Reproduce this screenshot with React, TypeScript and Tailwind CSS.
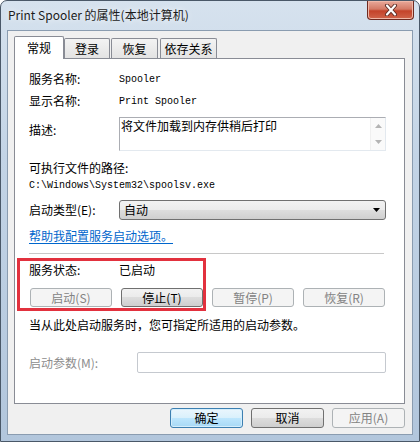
const cjk = "font-['Noto_Sans_CJK_SC','Noto_Sans',sans-serif]";
const mono = "font-['Liberation_Mono',monospace]";

function Btn({
  label,
  disabled,
  focused,
  className = '',
}: {
  label: string;
  disabled?: boolean;
  focused?: boolean;
  className?: string;
}) {
  let look =
    'border-[#707070] bg-[linear-gradient(#f2f2f2_0%,#ebebeb_50%,#dddddd_50%,#cfcfcf_100%)] text-black';
  if (disabled) look = 'border-[#adb2b5] bg-[#f4f4f4] text-[#838383]';
  if (focused)
    look =
      'border-[#3c7fb1] bg-[linear-gradient(#eaf6fd_0%,#d9f0fc_50%,#bee6fd_50%,#a7d9f5_100%)] text-black shadow-[inset_0_0_0_1px_#d4eefc]';
  return (
    <div
      className={`flex items-center justify-center rounded-[3px] border text-[12px] leading-none ${cjk} ${look} ${className}`}
    >
      {label}
    </div>
  );
}

function Tab({
  label,
  active,
  className = '',
}: {
  label: string;
  active?: boolean;
  className?: string;
}) {
  if (active) {
    return (
      <div
        className={`relative z-10 -mb-px flex h-[23px] items-center justify-center rounded-t-[2px] border border-b-0 border-[#898c95] bg-white pb-[1px] text-[12px] ${cjk} ${className}`}
      >
        {label}
      </div>
    );
  }
  return (
    <div
      className={`flex h-[20px] items-center justify-center whitespace-nowrap rounded-t-[2px] border border-b-0 border-[#898c95] bg-[linear-gradient(#f3f3f3,#e3e3e3)] text-[12px] ${cjk} ${className}`}
    >
      {label}
    </div>
  );
}

export default function App() {
  return (
    <div className="h-[442px] w-[420px] overflow-hidden bg-white">
      <div className="flex h-full w-full flex-col rounded-t-[7px] border border-[#4a5868] bg-[linear-gradient(180deg,#d6e2ee_0%,#c3d4e6_35%,#b2c6dc_100%)]">
        {/* title bar */}
        <div className="flex h-[29px] items-start justify-between pl-[7px] pr-[5px]">
          <span
            className={`mt-[6px] text-[12px] leading-[16px] text-[#1b1b1b] [text-shadow:0_0_6px_#ffffff] ${cjk}`}
          >
            Print Spooler 的属性(本地计算机)
          </span>
          <div className="flex h-[19px] w-[47px] items-center justify-center rounded-b-[4px] border border-t-0 border-[#6e2a20] bg-[linear-gradient(#e9a99a_0%,#d47a66_45%,#c4432a_55%,#d0644a_100%)] shadow-[inset_0_0_0_1px_#f0b8a8]">
            <svg width="14" height="12" viewBox="0 0 14 12">
              <path
                d="M3 1.5 L11 10.5 M11 1.5 L3 10.5"
                stroke="#5a2a22"
                strokeWidth="4"
                strokeLinecap="round"
                fill="none"
              />
              <path
                d="M3 1.5 L11 10.5 M11 1.5 L3 10.5"
                stroke="#ffffff"
                strokeWidth="2.2"
                strokeLinecap="round"
                fill="none"
              />
            </svg>
          </div>
        </div>

        {/* client area */}
        <div className="mx-[6px] mb-[6px] flex flex-1 flex-col border border-[#8a9cb0] bg-[#f0f0f0]">
          <div className="mt-[5px] flex h-[22px] items-end pl-[6px]">
            <Tab label="常规" active className="w-[50px]" />
            <Tab label="登录" className="w-[46px]" />
            <Tab label="恢复" className="ml-[1px] w-[47px]" />
            <Tab label="依存关系" className="ml-[2px] w-[57px]" />
          </div>

          {/* tab panel */}
          <div
            className={`relative ml-[6px] mr-[7px] flex h-[346px] flex-col border border-[#898c95] bg-white pl-[14px] pt-[11px] text-[12px] text-black ${cjk}`}
          >
            <div className="flex h-[18px] items-center">
              <span className="w-[90px]">服务名称:</span>
              <span className={`${mono} text-[10px]`}>Spooler</span>
            </div>
            <div className="mt-[4px] flex h-[18px] items-center">
              <span className="w-[90px]">显示名称:</span>
              <span className={`${mono} text-[10px]`}>Print Spooler</span>
            </div>
            <div className="mt-[7px] flex h-[34px] items-start">
              <span className="w-[90px] pt-[4px] leading-[18px]">描述:</span>
              <div className="flex h-[34px] w-[267px] border border-[#abadb3] border-r-[#e3e9ef] border-b-[#e3e9ef] bg-white">
                <div className="flex-1 pl-[1px] leading-[16px]">
                  将文件加载到内存供稍后打印
                </div>
                <div className="flex w-[15px] flex-col items-center justify-between border-l border-[#f0f0f0] bg-[#fafafa] py-[6px]">
                  <svg width="7" height="4" viewBox="0 0 7 4">
                    <path d="M0 4 L3.5 0 L7 4 Z" fill="#b4b4b4" />
                  </svg>
                  <svg width="7" height="4" viewBox="0 0 7 4">
                    <path d="M0 0 L3.5 4 L7 0 Z" fill="#b4b4b4" />
                  </svg>
                </div>
              </div>
            </div>
            <div className="mt-[8px] flex h-[18px] items-center">可执行文件的路径:</div>
            <div className={`flex h-[16px] items-center ${mono} text-[10px]`}>
              C:\Windows\System32\spoolsv.exe
            </div>
            <div className="mt-[7px] flex h-[20px] items-center">
              <span className="w-[90px]">启动类型(E):</span>
              <div className="flex h-[20px] w-[267px] items-center justify-between rounded-[3px] border border-[#707070] bg-[linear-gradient(#f2f2f2_0%,#ebebeb_50%,#dddddd_50%,#cfcfcf_100%)] pl-[4px] pr-[5px]">
                <span>自动</span>
                <svg width="7" height="4" viewBox="0 0 7 4">
                  <path d="M0 0 L3.5 4 L7 0 Z" fill="#000000" />
                </svg>
              </div>
            </div>
            <div className="mt-[7px] flex h-[18px] items-center">
              <span className="text-[#0066cc] underline underline-offset-2">
                帮助我配置服务启动选项。
              </span>
            </div>
            <div className="mt-[8px] h-px w-[355px] bg-[#c8c8c8]" />
            <div className="mt-[7px] flex h-[18px] items-center">
              <span className="w-[90px]">服务状态:</span>
              <span>已启动</span>
            </div>
            <div className="ml-[1px] mt-[9px] flex gap-[9px]">
              <Btn label="启动(S)" disabled className="h-[19px] w-[82px]" />
              <Btn label="停止(T)" className="h-[19px] w-[82px]" />
              <Btn label="暂停(P)" disabled className="h-[19px] w-[82px]" />
              <Btn label="恢复(R)" disabled className="h-[19px] w-[82px]" />
            </div>
            <div className="mt-[9px] flex h-[18px] items-center">
              当从此处启动服务时，您可指定所适用的启动参数。
            </div>
            <div className="mt-[18px] flex h-[21px] items-center">
              <span className="w-[108px] text-[#8d8d8d]">启动参数(M):</span>
              <div className="h-[21px] w-[249px] rounded-[2px] border border-[#c5c9cf] bg-white" />
            </div>

            {/* red highlight drawn over the status area */}
            <div className="pointer-events-none absolute left-[2px] top-[199px] h-[53px] w-[189px] border-[3px] border-[#e2313e]" />
          </div>

          {/* dialog buttons */}
          <div className="mr-[7px] mt-[4px] flex justify-end gap-[8px]">
            <Btn label="确定" focused className="h-[20px] w-[73px]" />
            <Btn label="取消" className="h-[20px] w-[73px]" />
            <Btn label="应用(A)" disabled className="h-[20px] w-[73px]" />
          </div>
        </div>
      </div>
    </div>
  );
}
